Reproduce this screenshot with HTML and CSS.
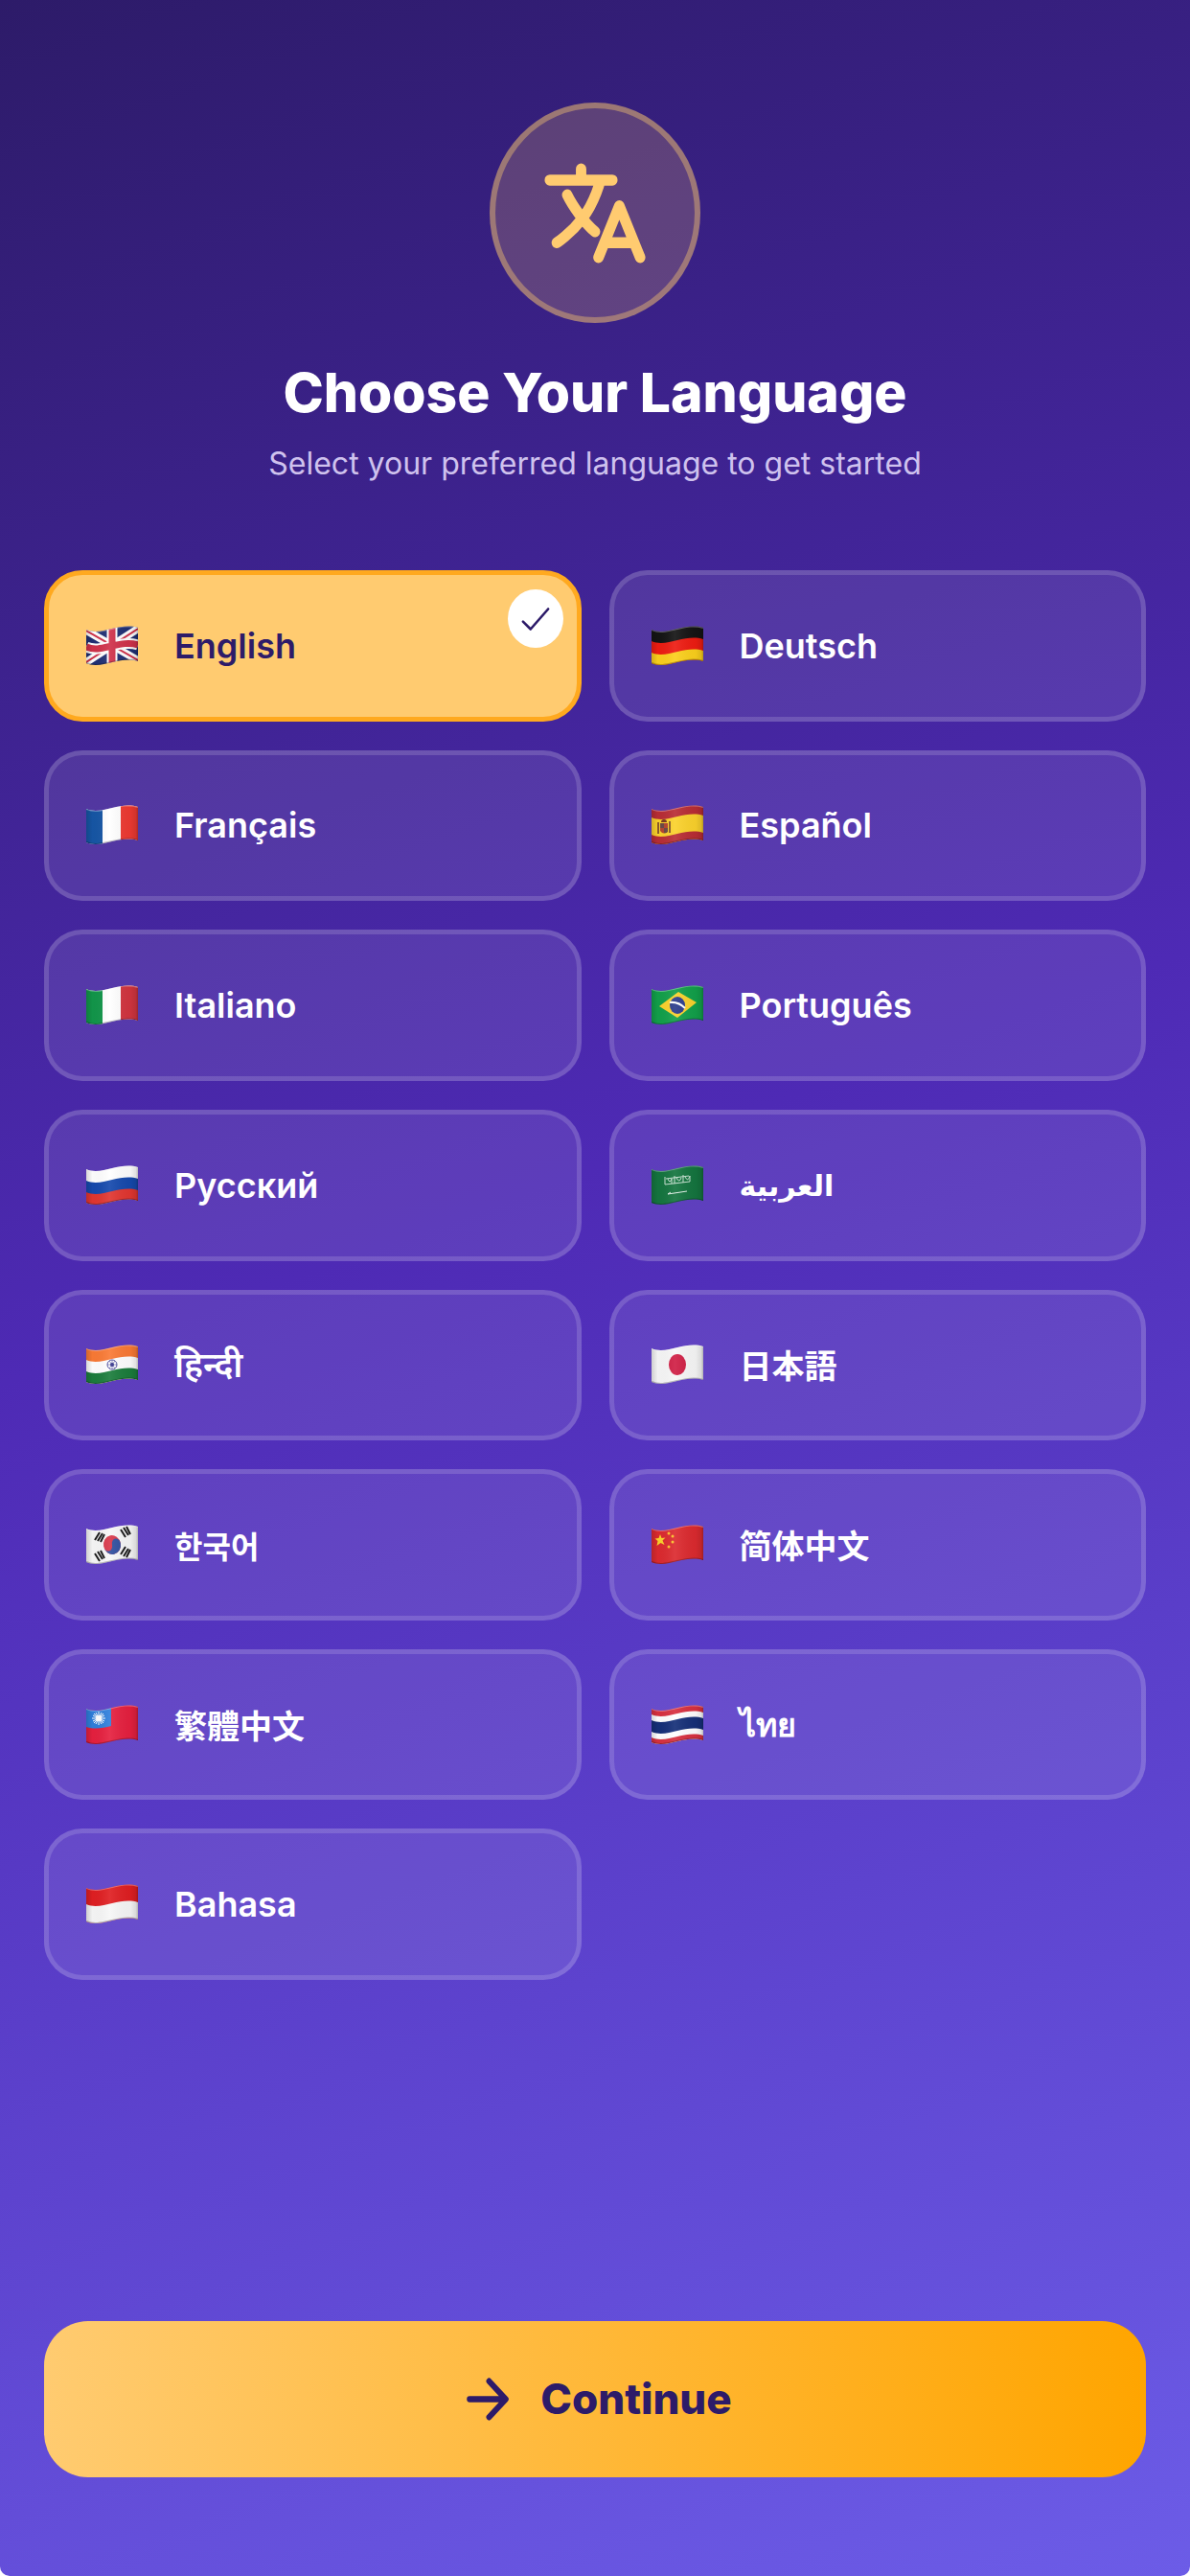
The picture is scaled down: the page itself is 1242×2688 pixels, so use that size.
FILE: index.html
```
<!DOCTYPE html>
<html lang="en">
	<head>
		<meta charset="utf-8">
		<meta name="viewport" content="width=device-width, initial-scale=1">
		<title>Choose Your Language</title>

		<link rel="stylesheet" href="styles.css">
	</head>
	<body>
		<!-- shared shapes for the waving flags -->
		<svg class="defs" width="0" height="0" aria-hidden="true">
			<defs>
				<clipPath id="cloth">
					<path d="M0 4C9 8 18 5 27 3S45 -1 54 2V37C45 34 36 36 27 38S9 43 0 39Z" />
				</clipPath>
				<path id="wave" d="M0 4C9 8 18 5 27 3S45 -1 54 2V60H0Z" />
				<linearGradient id="shade">
					<stop offset="0" stop-color="#000" stop-opacity="0.16" />
					<stop offset="0.12" stop-color="#000" stop-opacity="0.02" />
					<stop offset="0.45" stop-color="#fff" stop-opacity="0.08" />
					<stop offset="0.85" stop-color="#000" stop-opacity="0.04" />
					<stop offset="0.96" stop-color="#000" stop-opacity="0.12" />
					<stop offset="1" stop-color="#000" stop-opacity="0.28" />
				</linearGradient>
				<g id="folds">
					<rect width="54" height="44" fill="url(#shade)" />
					<path d="M0 4C9 8 18 5 27 3S45 -1 54 2" fill="none" stroke="#fff" stroke-opacity="0.3" stroke-width="2" />
					<path d="M0 39C9 43 18 40 27 38S45 34 54 37" fill="none" stroke="#000" stroke-opacity="0.25" stroke-width="2" />
				</g>
			</defs>
		</svg>

		<form class="page">
			<header class="header">
				<div class="badge">
					<svg class="badge-icon" viewBox="0 0 512 512" preserveAspectRatio="none" aria-hidden="true">
						<path d="M48 112h288M192 64v48M272 448l96-224 96 224M301.500 384h133M281.300 112S257 206 199 277 80 384 80 384M256 336s-35-27-72-75-56-85-56-85" />
					</svg>
				</div>
				<h1 class="title">Choose Your Language</h1>
				<p class="subtitle">Select your preferred language to get started</p>
			</header>

			<div class="languages" role="radiogroup" aria-label="Language">
				<label class="language">
					<input type="radio" name="language" value="en" checked>
					<svg class="flag" viewBox="0 0 54 42" aria-hidden="true">
						<g clip-path="url(#cloth)">
							<rect width="54" height="42" fill="#1f2f74" />
							<path d="M0 5L54 36M0 38L54 3" stroke="#fff" stroke-width="8" />
							<path d="M0 5L54 36M0 38L54 3" stroke="#d0314a" stroke-width="2" />
							<path d="M27 0V42M0 22C9 26 18 23 27 21S45 17 54 20" fill="none" stroke="#fff" stroke-width="11" />
							<path d="M27 0V42M0 22C9 26 18 23 27 21S45 17 54 20" fill="none" stroke="#d0314a" stroke-width="7" />
							<use href="#folds" />
						</g>
					</svg>
					<span class="name">English</span>
					<span class="check">
						<svg viewBox="0 0 512 512" aria-hidden="true"><path d="M416 128L192 384l-96-96" /></svg>
					</span>
				</label>

				<label class="language">
					<input type="radio" name="language" value="de">
					<svg class="flag" viewBox="0 0 54 42" aria-hidden="true">
						<g clip-path="url(#cloth)">
							<rect width="54" height="42" fill="#141414" />
							<use href="#wave" y="12" fill="#ee1c12" />
							<use href="#wave" y="24" fill="#fbd01c" />
							<use href="#folds" />
						</g>
					</svg>
					<span class="name" lang="de">Deutsch</span>
					<span class="check">
						<svg viewBox="0 0 512 512" aria-hidden="true"><path d="M416 128L192 384l-96-96" /></svg>
					</span>
				</label>

				<label class="language">
					<input type="radio" name="language" value="fr">
					<svg class="flag" viewBox="0 0 54 42" aria-hidden="true">
						<g clip-path="url(#cloth)">
							<rect width="54" height="42" fill="#fff" />
							<rect width="17" height="42" fill="#1656a5" />
							<rect x="36" width="18" height="42" fill="#ee3a32" />
							<use href="#folds" />
						</g>
					</svg>
					<span class="name" lang="fr">Français</span>
					<span class="check">
						<svg viewBox="0 0 512 512" aria-hidden="true"><path d="M416 128L192 384l-96-96" /></svg>
					</span>
				</label>

				<label class="language">
					<input type="radio" name="language" value="es">
					<svg class="flag" viewBox="0 0 54 42" aria-hidden="true">
						<g clip-path="url(#cloth)">
							<rect width="54" height="42" fill="#b92d35" />
							<use href="#wave" y="9" fill="#fbd22c" />
							<use href="#wave" y="27" fill="#b92d35" />
							<path d="M7 18V30M19 17V29" stroke="#8b5a2a" stroke-width="2" />
							<path d="M9 19h8v8q-4 5-8 0Z" fill="#b5452f" />
							<path d="M9 19h4v5h4v4q-2 2-4 1v-5H9Z" fill="#6c4a45" />
							<path d="M10 18q0-3 3-3t3 3Z" fill="#7a3a20" />
							<use href="#folds" />
						</g>
					</svg>
					<span class="name" lang="es">Español</span>
					<span class="check">
						<svg viewBox="0 0 512 512" aria-hidden="true"><path d="M416 128L192 384l-96-96" /></svg>
					</span>
				</label>

				<label class="language">
					<input type="radio" name="language" value="it">
					<svg class="flag" viewBox="0 0 54 42" aria-hidden="true">
						<g clip-path="url(#cloth)">
							<rect width="54" height="42" fill="#fff" />
							<rect width="17" height="42" fill="#12964a" />
							<rect x="36" width="18" height="42" fill="#d2353f" />
							<use href="#folds" />
						</g>
					</svg>
					<span class="name" lang="it">Italiano</span>
					<span class="check">
						<svg viewBox="0 0 512 512" aria-hidden="true"><path d="M416 128L192 384l-96-96" /></svg>
					</span>
				</label>

				<label class="language">
					<input type="radio" name="language" value="pt">
					<svg class="flag" viewBox="0 0 54 42" aria-hidden="true">
						<g clip-path="url(#cloth)">
							<rect width="54" height="42" fill="#12a04a" />
							<path d="M8 22L28 7 47 18 27 34Z" fill="#fbd22c" />
							<ellipse cx="27" cy="21" rx="8" ry="9" fill="#2c3c8c" />
							<path d="M19 18q9-1 16 6" fill="none" stroke="#fff" stroke-width="2" />
							<use href="#folds" />
						</g>
					</svg>
					<span class="name" lang="pt">Português</span>
					<span class="check">
						<svg viewBox="0 0 512 512" aria-hidden="true"><path d="M416 128L192 384l-96-96" /></svg>
					</span>
				</label>

				<label class="language">
					<input type="radio" name="language" value="ru">
					<svg class="flag" viewBox="0 0 54 42" aria-hidden="true">
						<g clip-path="url(#cloth)">
							<rect width="54" height="42" fill="#fff" />
							<use href="#wave" y="12" fill="#1549ad" />
							<use href="#wave" y="24" fill="#e23630" />
							<use href="#folds" />
						</g>
					</svg>
					<span class="name" lang="ru">Русский</span>
					<span class="check">
						<svg viewBox="0 0 512 512" aria-hidden="true"><path d="M416 128L192 384l-96-96" /></svg>
					</span>
				</label>

				<label class="language">
					<input type="radio" name="language" value="ar">
					<svg class="flag" viewBox="0 0 54 42" aria-hidden="true">
						<g clip-path="url(#cloth)">
							<rect width="54" height="42" fill="#14753f" />
							<path d="M14 12v8M17 14q2 6 4 0v5M24 11v8M26 13q3 6 5 0M33 10v8M35 12q3 6 5-1v6M14 20l26-3M15 14l24-3" fill="none" stroke="#c8e2d2" stroke-width="1" />
							<path d="M17 30l20-3M17 30l3-2" fill="none" stroke="#e4f2ea" stroke-width="1" />
							<use href="#folds" />
						</g>
					</svg>
					<span class="name" lang="ar">العربية</span>
					<span class="check">
						<svg viewBox="0 0 512 512" aria-hidden="true"><path d="M416 128L192 384l-96-96" /></svg>
					</span>
				</label>

				<label class="language">
					<input type="radio" name="language" value="hi">
					<svg class="flag" viewBox="0 0 54 42" aria-hidden="true">
						<g clip-path="url(#cloth)">
							<rect width="54" height="42" fill="#fa7a35" />
							<use href="#wave" y="12" fill="#fff" />
							<use href="#wave" y="24" fill="#1b7d3c" />
							<circle cx="27" cy="21" r="5" fill="none" stroke="#4a4a9c" stroke-width="1" />
							<path d="M27 16v10M22 21h10M24 17l6 8M30 17l-6 8" stroke="#4a4a9c" stroke-opacity="0.6" />
							<circle cx="27" cy="21" r="2" fill="#35358c" />
							<use href="#folds" />
						</g>
					</svg>
					<span class="name" lang="hi">हिन्दी</span>
					<span class="check">
						<svg viewBox="0 0 512 512" aria-hidden="true"><path d="M416 128L192 384l-96-96" /></svg>
					</span>
				</label>

				<label class="language">
					<input type="radio" name="language" value="ja">
					<svg class="flag" viewBox="0 0 54 42" aria-hidden="true">
						<g clip-path="url(#cloth)">
							<rect width="54" height="42" fill="#f7f7f7" />
							<ellipse cx="27" cy="21" rx="9" ry="11" fill="#d01f45" />
							<use href="#folds" />
						</g>
					</svg>
					<span class="name" lang="ja">日本語</span>
					<span class="check">
						<svg viewBox="0 0 512 512" aria-hidden="true"><path d="M416 128L192 384l-96-96" /></svg>
					</span>
				</label>

				<label class="language">
					<input type="radio" name="language" value="ko">
					<svg class="flag" viewBox="0 0 54 42" aria-hidden="true">
						<g clip-path="url(#cloth)">
							<rect width="54" height="42" fill="#f7f7f7" />
							<g transform="rotate(-12 27 21)">
								<ellipse cx="27" cy="21" rx="9" ry="10" fill="#d8384a" />
								<path d="M18 21a4 5 0 0 0 9 0a4 5 0 0 1 9 0a9 10 0 0 1-18 0" fill="#2f4f9f" />
							</g>
							<path d="M9 16l5-8M12 17l5-8M15 18l4-8M36 5l5 8M39 3l5 8M42 2l4 8M9 30l5 8M12 28l5 8M15 27l4 8M36 31l5-8M39 33l5-8M42 34l4-8" stroke="#1c1c1c" stroke-width="2" />
							<use href="#folds" />
						</g>
					</svg>
					<span class="name" lang="ko">한국어</span>
					<span class="check">
						<svg viewBox="0 0 512 512" aria-hidden="true"><path d="M416 128L192 384l-96-96" /></svg>
					</span>
				</label>

				<label class="language">
					<input type="radio" name="language" value="zh-Hans">
					<svg class="flag" viewBox="0 0 54 42" aria-hidden="true">
						<g clip-path="url(#cloth)">
							<rect width="54" height="42" fill="#dc2a2f" />
							<path d="M9 10l1.500 4 4-.5-3 3 2 4.500-4-2-4 3 1-5-3-2.500 4-.5Z" fill="#fbd22c" />
							<circle cx="18" cy="9" r="1.500" fill="#fbc02c" />
							<circle cx="22" cy="12" r="1.500" fill="#fbc02c" />
							<circle cx="22" cy="18" r="1.500" fill="#fbc02c" />
							<circle cx="18" cy="23" r="1.500" fill="#fbc02c" />
							<use href="#folds" />
						</g>
					</svg>
					<span class="name" lang="zh-Hans">简体中文</span>
					<span class="check">
						<svg viewBox="0 0 512 512" aria-hidden="true"><path d="M416 128L192 384l-96-96" /></svg>
					</span>
				</label>

				<label class="language">
					<input type="radio" name="language" value="zh-Hant">
					<svg class="flag" viewBox="0 0 54 42" aria-hidden="true">
						<g clip-path="url(#cloth)">
							<rect width="54" height="42" fill="#e6203f" />
							<path d="M0 0H26V22C18 24 9 26 0 23Z" fill="#2f7fdc" />
							<path d="M13 7v14M6 14h14M8 9l10 10M18 9L8 19M10 8l6 12M16 8l-6 12M7 11l12 6M19 11L7 17" stroke="#fff" stroke-width="1" />
							<circle cx="13" cy="14" r="3" fill="#fff" />
							<use href="#folds" />
						</g>
					</svg>
					<span class="name" lang="zh-Hant">繁體中文</span>
					<span class="check">
						<svg viewBox="0 0 512 512" aria-hidden="true"><path d="M416 128L192 384l-96-96" /></svg>
					</span>
				</label>

				<label class="language">
					<input type="radio" name="language" value="th">
					<svg class="flag" viewBox="0 0 54 42" aria-hidden="true">
						<g clip-path="url(#cloth)">
							<rect width="54" height="42" fill="#d8303f" />
							<use href="#wave" y="6" fill="#fff" />
							<use href="#wave" y="12" fill="#152f78" />
							<use href="#wave" y="24" fill="#fff" />
							<use href="#wave" y="30" fill="#d8303f" />
							<use href="#folds" />
						</g>
					</svg>
					<span class="name" lang="th">ไทย</span>
					<span class="check">
						<svg viewBox="0 0 512 512" aria-hidden="true"><path d="M416 128L192 384l-96-96" /></svg>
					</span>
				</label>

				<label class="language">
					<input type="radio" name="language" value="id">
					<svg class="flag" viewBox="0 0 54 42" aria-hidden="true">
						<g clip-path="url(#cloth)">
							<rect width="54" height="42" fill="#e01f22" />
							<use href="#wave" y="17" fill="#f7f7f7" />
							<use href="#folds" />
						</g>
					</svg>
					<span class="name" lang="id">Bahasa</span>
					<span class="check">
						<svg viewBox="0 0 512 512" aria-hidden="true"><path d="M416 128L192 384l-96-96" /></svg>
					</span>
				</label>
			</div>

			<button class="continue" type="submit">
				<svg class="arrow" viewBox="0 0 512 512" preserveAspectRatio="none" aria-hidden="true">
					<path d="M268 112l144 144-144 144M392 256H100" />
				</svg>
				Continue
			</button>
		</form>
	</body>
</html>
```
FILE: styles.css
```
* {
	box-sizing: border-box;
}

body {
	margin: 0;
	background-color: #ffffff;
	font-family: Inter, "Noto Sans", "Noto Sans CJK SC", "DejaVu Sans", sans-serif;
}

.defs {
	position: absolute;
}

.page {
	display: flex;
	flex-direction: column;
	min-height: 100vh;
	padding: 107px 46px 103px;
	border-radius: 0 0 10px 10px;
	background: linear-gradient(160deg, #2d1b69 0%, #4e2ab5 46%, #6c5ce7 100%);
}

.header {
	display: flex;
	flex-direction: column;
	align-items: center;
	text-align: center;
}

.badge {
	display: flex;
	align-items: center;
	justify-content: center;
	width: 220px;
	height: 230px;
	border: 6px solid rgba(253, 203, 110, 0.4);
	border-radius: 50%;
	background-color: rgba(253, 203, 110, 0.2);
}

.badge-icon {
	width: 116px;
	height: 123px;
	fill: none;
	stroke: #ffcb70;
	stroke-width: 48px;
	stroke-linecap: round;
	stroke-linejoin: round;
}

.title {
	margin: 38px 0 0;
	color: #ffffff;
	font-size: 57px;
	font-weight: 800;
	line-height: 70px;
}

.subtitle {
	margin: 18px 0 0;
	color: #cfc2ee;
	font-size: 32px;
	line-height: 42px;
}

.languages {
	display: grid;
	grid-template-columns: 1fr 1fr;
	grid-auto-rows: 1fr;
	gap: 30px 29px;
	min-height: 1471px;
	margin: 90px 0;
}

.language {
	position: relative;
	display: flex;
	align-items: center;
	gap: 38px;
	padding: 0 39px;
	border: 5px solid rgba(255, 255, 255, 0.15);
	border-radius: 40px;
	background-color: rgba(255, 255, 255, 0.09);
	color: #ffffff;
	cursor: pointer;
}

.language input {
	position: absolute;
	opacity: 0;
}

.language:has(input:checked) {
	border-color: #ffa91f;
	background-color: #ffcb70;
	color: #2d1b69;
}

.flag {
	flex: none;
	width: 54px;
	height: 42px;
}

.name {
	font-size: 36px;
	font-weight: 600;
	line-height: 48px;
}

.name:lang(ar) {
	font-size: 30px;
}

.name:lang(ja) {
	font-family: "Noto Sans CJK JP", sans-serif;
	font-size: 34px;
}

.name:lang(ko) {
	font-family: "Noto Sans CJK KR", sans-serif;
	font-size: 32px;
}

.name:lang(zh-Hans) {
	font-family: "Noto Sans CJK SC", sans-serif;
	font-size: 34px;
}

.name:lang(zh-Hant) {
	font-family: "Noto Sans CJK TC", sans-serif;
	font-size: 34px;
}

.name:lang(th) {
	font-size: 34px;
}

.check {
	position: absolute;
	top: 15px;
	right: 14px;
	display: none;
	align-items: center;
	justify-content: center;
	width: 58px;
	height: 61px;
	border-radius: 50%;
	background-color: #ffffff;
}

.language input:checked ~ .check {
	display: flex;
}

.check svg {
	width: 42px;
	height: 42px;
	fill: none;
	stroke: #2d1b69;
	stroke-width: 32px;
	stroke-linecap: round;
	stroke-linejoin: round;
}

.continue {
	display: flex;
	align-items: center;
	justify-content: center;
	gap: 24px;
	margin-top: auto;
	padding: 48px;
	border: none;
	border-radius: 46px;
	background: linear-gradient(90deg, #ffcb70, #ffa500);
	color: #2d1b69;
	font-family: inherit;
	font-size: 44px;
	font-weight: 800;
	line-height: 67px;
	cursor: pointer;
}

.arrow {
	width: 62px;
	height: 67px;
	fill: none;
	stroke: #2d1b69;
	stroke-width: 48px;
	stroke-linecap: round;
	stroke-linejoin: round;
}
```
